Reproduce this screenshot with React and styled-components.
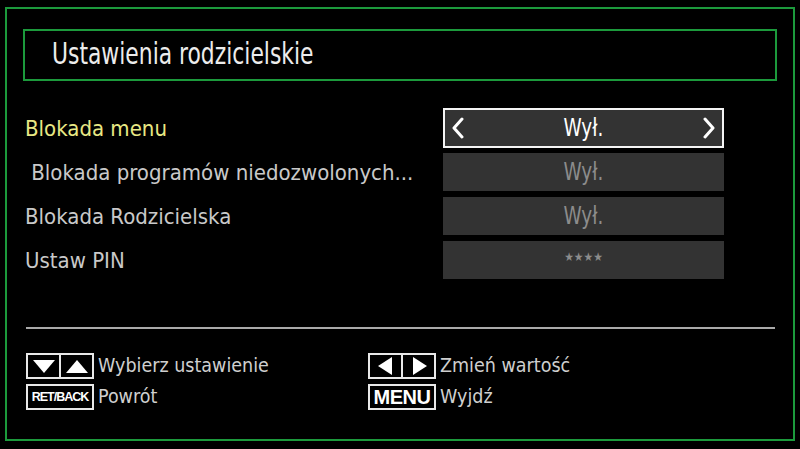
import React from "react";
import styled, { createGlobalStyle } from "styled-components";

const GlobalStyle = createGlobalStyle`
  html, body {
    margin: 0;
    padding: 0;
    background: #000;
  }
  body {
    font-family: "DejaVu Sans Condensed", "DejaVu Sans", sans-serif;
    color: #cfcfcf;
  }
`;

const rows = [
  { label: "Blokada menu", value: "Wył.", selected: true },
  { label: "\u00a0Blokada programów niedozwolonych...", value: "Wył." },
  { label: "Blokada Rodzicielska", value: "Wył." },
  { label: "Ustaw PIN", value: "★★★★", pin: true },
];

const Triangle = ({ dir }) => {
  const pts = {
    down: "0,4 22,4 11,17",
    up: "0,17 22,17 11,4",
    left: "3,10 17,1 17,19",
    right: "5,1 19,10 5,19",
  }[dir];
  return (
    <svg width="22" height="20" viewBox="0 0 22 20">
      <polygon points={pts} fill="#fff" />
    </svg>
  );
};

const Chevron = ({ right }) => (
  <svg width="14" height="22" viewBox="0 0 14 22">
    <polyline
      points={right ? "3,2 11,11 3,20" : "11,2 3,11 11,20"}
      fill="none"
      stroke="#fff"
      strokeWidth="3"
      strokeLinecap="round"
      strokeLinejoin="round"
    />
  </svg>
);

const App = () => {
  return (
    <>
      <GlobalStyle />
      <Frame>
        <TitleBox>
          <Title>Ustawienia rodzicielskie</Title>
        </TitleBox>

        <List>
          {rows.map((r) => (
            <Row key={r.label}>
              <Label $selected={r.selected}>{r.label}</Label>
              <ValueBox $selected={r.selected}>
                {r.selected && <Chevron />}
                <Value $selected={r.selected} $pin={r.pin}>
                  {r.value}
                </Value>
                {r.selected && <Chevron right />}
              </ValueBox>
            </Row>
          ))}
        </List>

        <Divider />

        <Footer>
          <Hint>
            <KeyGroup>
              <Key>
                <Triangle dir="down" />
              </Key>
              <Key>
                <Triangle dir="up" />
              </Key>
            </KeyGroup>
            <HintText>Wybierz ustawienie</HintText>
          </Hint>
          <Hint>
            <KeyGroup>
              <Key>
                <Triangle dir="left" />
              </Key>
              <Key>
                <Triangle dir="right" />
              </Key>
            </KeyGroup>
            <HintText>Zmień wartość</HintText>
          </Hint>
          <Hint>
            <KeyGroup>
              <KeyLabel $small>RET/BACK</KeyLabel>
            </KeyGroup>
            <HintText>Powrót</HintText>
          </Hint>
          <Hint>
            <KeyGroup>
              <KeyLabel>MENU</KeyLabel>
            </KeyGroup>
            <HintText>Wyjdź</HintText>
          </Hint>
        </Footer>
      </Frame>
    </>
  );
};

const Frame = styled.div`
  box-sizing: border-box;
  width: 790px;
  height: 434px;
  margin: 7px 0 0 5px;
  border: 2px solid #1c9a3c;
  padding: 20px 16px 0 16px;
  display: flex;
  flex-direction: column;
`;

const TitleBox = styled.div`
  box-sizing: border-box;
  height: 52px;
  border: 2px solid #1c9a3c;
  display: flex;
  align-items: center;
  padding-left: 27px;
`;

const Title = styled.h1`
  margin: 0;
  font-weight: normal;
  font-size: 30px;
  color: #ececec;
  line-height: 1;
  padding-bottom: 2px;
  transform: scaleX(0.81);
  transform-origin: left center;
`;

const List = styled.div`
  margin-top: 25px;
  display: flex;
  flex-direction: column;
`;

const Row = styled.div`
  height: 44px;
  display: grid;
  grid-template-columns: 1fr 281px;
  align-items: center;
  padding: 0 53px 0 2px;
`;

const Label = styled.div`
  font-size: 22px;
  color: ${(p) => (p.$selected ? "#e8e884" : "#c9c9c9")};
  white-space: pre;
`;

const ValueBox = styled.div`
  box-sizing: border-box;
  height: ${(p) => (p.$selected ? "40px" : "38px")};
  background: #333333;
  border: ${(p) => (p.$selected ? "2px solid #f4f4f4" : "none")};
  display: flex;
  align-items: center;
  justify-content: ${(p) => (p.$selected ? "space-between" : "center")};
  padding: 0 6px 0 6px;
`;

const Value = styled.span`
  font-size: ${(p) => (p.$pin ? "12px" : "25px")};
  color: ${(p) => (p.$selected ? "#ffffff" : "#8c8c8c")};
  line-height: 1;
  padding-bottom: ${(p) => (p.$pin ? "6px" : "2px")};
  transform: ${(p) => (p.$pin ? "none" : "scaleX(0.82)")};
`;

const Divider = styled.div`
  margin: 45px 2px 0 3px;
  height: 2px;
  background: #a9a9a9;
`;

const Footer = styled.div`
  margin-top: 24px;
  padding-left: 3px;
  display: grid;
  grid-template-columns: 342px 1fr;
  row-gap: 5px;
`;

const Hint = styled.div`
  display: flex;
  align-items: center;
  gap: 4px;
`;

const KeyGroup = styled.div`
  box-sizing: border-box;
  width: 68px;
  height: 26px;
  border: 2px solid #e8e8e8;
  display: flex;
`;

const Key = styled.div`
  flex: 1;
  display: flex;
  align-items: center;
  justify-content: center;
  & + & {
    border-left: 2px solid #e8e8e8;
  }
`;

const KeyLabel = styled.div`
  flex: 1;
  display: flex;
  align-items: center;
  justify-content: center;
  font-family: "Liberation Sans", Arial, sans-serif;
  font-weight: bold;
  color: #fff;
  font-size: ${(p) => (p.$small ? "12.5px" : "20px")};
  letter-spacing: ${(p) => (p.$small ? "-1px" : "-0.5px")};
`;

const HintText = styled.span`
  font-size: 19.5px;
  color: #cfcfcf;
  line-height: 1;
`;

export default App;
